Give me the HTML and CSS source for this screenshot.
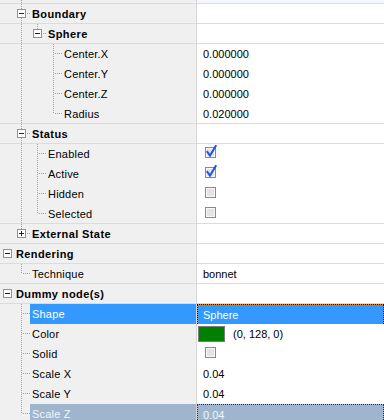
FILE: index.html
```html
<!DOCTYPE html>
<html lang="en">
<head>
    <meta charset="UTF-8">
    <title>Property Grid</title>
    <link rel="stylesheet" href="styles.css">
</head>
<body>
    <!-- Property grid -->
    <div class="grid">
        <div class="row top sep">
            <div class="name"><span class="g0"></span><span class="g pipe"></span></div>
            <div class="val"></div>
        </div>

        <div class="row cat sep">
            <div class="name"><span class="g0"></span><span class="g bx mid"><i class="box"></i></span><span class="lbl">Boundary</span></div>
            <div class="val"></div>
        </div>
        <div class="row cat sep">
            <div class="name"><span class="g0"></span><span class="g pipe"></span><span class="g bx last"><i class="box"></i></span><span class="lbl">Sphere</span></div>
            <div class="val"></div>
        </div>
        <div class="row">
            <div class="name"><span class="g0"></span><span class="g pipe"></span><span class="g"></span><span class="g tee"></span><span class="lbl">Center.X</span></div>
            <div class="val">0.000000</div>
        </div>
        <div class="row">
            <div class="name"><span class="g0"></span><span class="g pipe"></span><span class="g"></span><span class="g tee"></span><span class="lbl">Center.Y</span></div>
            <div class="val">0.000000</div>
        </div>
        <div class="row">
            <div class="name"><span class="g0"></span><span class="g pipe"></span><span class="g"></span><span class="g tee"></span><span class="lbl">Center.Z</span></div>
            <div class="val">0.000000</div>
        </div>
        <div class="row sep">
            <div class="name"><span class="g0"></span><span class="g pipe"></span><span class="g"></span><span class="g end"></span><span class="lbl">Radius</span></div>
            <div class="val">0.020000</div>
        </div>

        <div class="row cat sep">
            <div class="name"><span class="g0"></span><span class="g bx mid"><i class="box"></i></span><span class="lbl">Status</span></div>
            <div class="val"></div>
        </div>
        <div class="row">
            <div class="name"><span class="g0"></span><span class="g pipe"></span><span class="g tee"></span><span class="lbl">Enabled</span></div>
            <div class="val"><svg class="chk" width="14" height="20" viewBox="0 0 14 20"><rect x="0.5" y="3.5" width="10" height="10" fill="#f7f7f7" stroke="#8a8a8a"/><rect x="2" y="5" width="7" height="7" fill="#e4e4e4"/><polyline points="1.8,7.2 5,11.6 11.2,1.2" fill="none" stroke="#2158d8" stroke-width="2"/></svg></div>
        </div>
        <div class="row">
            <div class="name"><span class="g0"></span><span class="g pipe"></span><span class="g tee"></span><span class="lbl">Active</span></div>
            <div class="val"><svg class="chk" width="14" height="20" viewBox="0 0 14 20"><rect x="0.5" y="3.5" width="10" height="10" fill="#f7f7f7" stroke="#8a8a8a"/><rect x="2" y="5" width="7" height="7" fill="#e4e4e4"/><polyline points="1.8,7.2 5,11.6 11.2,1.2" fill="none" stroke="#2158d8" stroke-width="2"/></svg></div>
        </div>
        <div class="row">
            <div class="name"><span class="g0"></span><span class="g pipe"></span><span class="g tee"></span><span class="lbl">Hidden</span></div>
            <div class="val"><svg class="chk" width="14" height="20" viewBox="0 0 14 20"><rect x="0.5" y="3.5" width="10" height="10" fill="#f7f7f7" stroke="#8a8a8a"/><rect x="2" y="5" width="7" height="7" fill="#e4e4e4"/></svg></div>
        </div>
        <div class="row sep">
            <div class="name"><span class="g0"></span><span class="g pipe"></span><span class="g end"></span><span class="lbl">Selected</span></div>
            <div class="val"><svg class="chk" width="14" height="20" viewBox="0 0 14 20"><rect x="0.5" y="3.5" width="10" height="10" fill="#f7f7f7" stroke="#8a8a8a"/><rect x="2" y="5" width="7" height="7" fill="#e4e4e4"/></svg></div>
        </div>
        <div class="row cat sep">
            <div class="name"><span class="g0"></span><span class="g bx last"><i class="box plus"></i></span><span class="lbl">External State</span></div>
            <div class="val"></div>
        </div>

        <div class="row cat sep">
            <div class="name"><span class="g0 bx"><i class="box"></i></span><span class="lbl">Rendering</span></div>
            <div class="val"></div>
        </div>
        <div class="row sep">
            <div class="name"><span class="g0"></span><span class="g end"></span><span class="lbl">Technique</span></div>
            <div class="val">bonnet</div>
        </div>

        <div class="row cat sep">
            <div class="name"><span class="g0 bx"><i class="box"></i></span><span class="lbl">Dummy node(s)</span></div>
            <div class="val"></div>
        </div>
        <div class="row sel">
            <div class="name"><span class="g0"></span><span class="g tee"></span><span class="lbl">Shape</span></div>
            <div class="val">Sphere</div>
        </div>
        <div class="row">
            <div class="name"><span class="g0"></span><span class="g tee"></span><span class="lbl">Color</span></div>
            <div class="val colr"><span class="swatch"></span>(0, 128, 0)</div>
        </div>
        <div class="row">
            <div class="name"><span class="g0"></span><span class="g tee"></span><span class="lbl">Solid</span></div>
            <div class="val"><svg class="chk" width="14" height="20" viewBox="0 0 14 20"><rect x="0.5" y="3.5" width="10" height="10" fill="#f7f7f7" stroke="#8a8a8a"/><rect x="2" y="5" width="7" height="7" fill="#e4e4e4"/></svg></div>
        </div>
        <div class="row">
            <div class="name"><span class="g0"></span><span class="g tee"></span><span class="lbl">Scale X</span></div>
            <div class="val">0.04</div>
        </div>
        <div class="row">
            <div class="name"><span class="g0"></span><span class="g tee"></span><span class="lbl">Scale Y</span></div>
            <div class="val">0.04</div>
        </div>
        <div class="row hot">
            <div class="name"><span class="g0"></span><span class="g end"></span><span class="lbl">Scale Z</span></div>
            <div class="val">0.04</div>
        </div>
    </div>
</body>
</html>
```

FILE: styles.css
```css
/* Reset */
* {
    margin: 0;
    padding: 0;
    box-sizing: border-box;
}

body {
    font-family: 'Liberation Sans', Arial, sans-serif;
    font-size: 11px;
    color: #000;
    background-color: #fff;
    overflow: hidden;

    --dv: repeating-linear-gradient(#a0a0a0 0 1px, transparent 1px 2px);
    --dh: repeating-linear-gradient(90deg, #a0a0a0 0 1px, transparent 1px 2px);
    --line: linear-gradient(#dcdcdc, #dcdcdc);
}

/* Rows */
.row {
    display: grid;
    grid-template-columns: 197px 1fr;
    height: 20px;
}

.row.top {
    height: 4px;
}

.name {
    display: flex;
    background-color: #f0f0f0;
    border-right: 1px solid #d6d6d6;
    overflow: hidden;
}

.val {
    display: flex;
    align-items: center;
    padding-left: 6px;
    line-height: 20px;
    white-space: nowrap;
    background-color: #fff;
}

.row.top .val {
    background-color: #f4f7fc;
}

/* separator line under category rows */
.sep .name,
.sep .val {
    background-image: var(--line);
    background-position: bottom;
    background-size: 100% 1px;
    background-repeat: no-repeat;
}

.lbl {
    flex: 1;
    padding-left: 2px;
    line-height: 20px;
    letter-spacing: 0.2px;
    white-space: nowrap;
}

.cat .lbl {
    font-weight: bold;
    letter-spacing: 0.4px;
}

/* Tree guides */
.g0 {
    flex: none;
    width: 14px;
    height: 20px;
}

.g {
    flex: none;
    width: 16px;
    height: 20px;
}

.pipe {
    background: var(--dv) 7px 0 / 1px 100% no-repeat;
}

.tee {
    background: var(--dv) 7px 0 / 1px 100% no-repeat,
                var(--dh) 9px 9px / 7px 1px no-repeat;
}

.end {
    background: var(--dv) 7px 0 / 1px 10px no-repeat,
                var(--dh) 9px 9px / 7px 1px no-repeat;
}

.bx {
    padding: 5px 0 0 3px;
}

.bx.mid {
    background: var(--dv) 7px 0 / 1px 100% no-repeat,
                var(--dh) 13px 9px / 3px 1px no-repeat;
}

.bx.last {
    background: var(--dv) 7px 0 / 1px 5px no-repeat,
                var(--dh) 13px 9px / 3px 1px no-repeat;
}

.box {
    display: block;
    width: 9px;
    height: 9px;
    border: 1px solid #919191;
    background: linear-gradient(#222, #222) center / 5px 1px no-repeat, #fff;
}

.box.plus {
    background: linear-gradient(#222, #222) center / 5px 1px no-repeat,
                linear-gradient(#222, #222) center / 1px 5px no-repeat, #fff;
}

/* Value widgets */
.chk {
    display: block;
    margin-left: 2px;
}

.val.colr {
    padding-left: 1px;
}

.swatch {
    width: 27px;
    height: 16px;
    margin-right: 8px;
    background-color: #008000;
    border: 1px solid #7c7c7c;
}

/* Selected row */
.row.sel .lbl {
    background-color: #3399ff;
    color: #fff;
}

.row.sel .val {
    background: linear-gradient(#3399ff, #3399ff) padding-box, #e8901c;
    border: 1px dotted #000;
    padding-left: 5px;
    color: #fff;
}

/* Row being edited */
.row.hot .lbl {
    background-color: #9fb5cd;
    color: #f2f5f9;
}

.row.hot .val {
    background-color: #9fb5cd;
    border: 1px dotted #2e3440;
    padding-left: 5px;
    color: #f2f5f9;
}
```
